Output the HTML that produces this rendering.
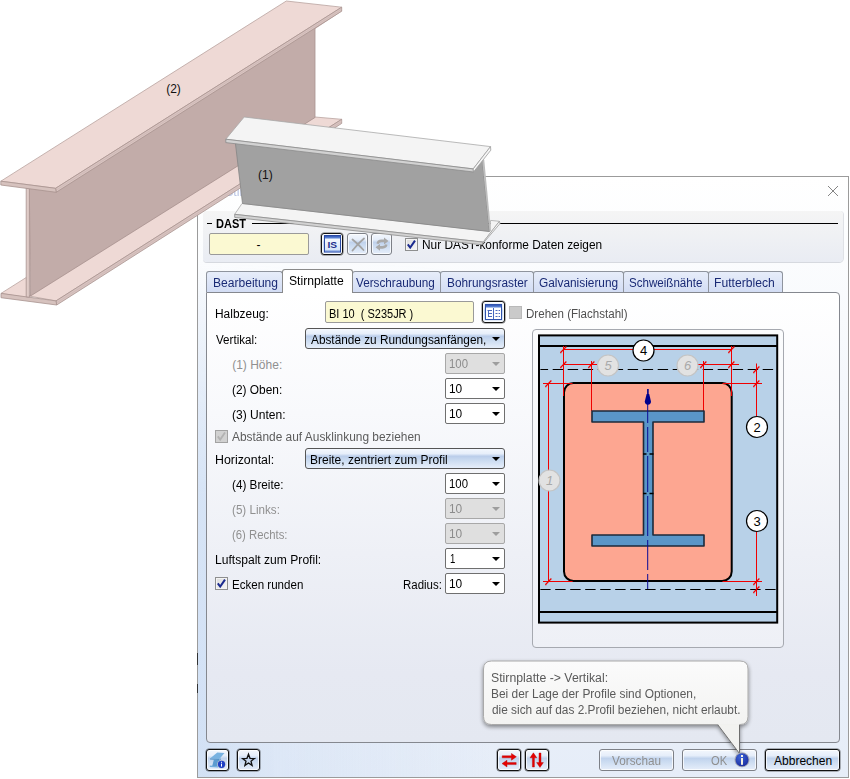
<!DOCTYPE html>
<html lang="de">
<head>
<meta charset="utf-8">
<title>Stirnplattenanschluss</title>
<style>
html,body{margin:0;padding:0;background:#fff;}
body{width:850px;height:779px;position:relative;overflow:hidden;font-family:"Liberation Sans",sans-serif;font-size:12px;color:#000;}
.abs{position:absolute;}
.t{position:absolute;white-space:nowrap;line-height:16px;height:16px;transform-origin:0 50%;}
.g{color:#8e8e8e;}
#dlg{position:absolute;left:197px;top:176px;width:650px;height:600px;border:1px solid #9b9b9b;background:linear-gradient(#ffffff 0px,#fcfdfe 60px,#f0f4fb 300px,#e6edf8 600px);}
#grp{position:absolute;left:203px;top:211px;width:640px;height:51px;border-radius:4px;background:linear-gradient(#f5f5f5,#e9ecf3);box-shadow:0 1px 0 #d6d9df, 1px 0 0 #dfe1e6;}
.tab{position:absolute;box-sizing:border-box;top:271px;height:21px;border:1px solid #8f949e;border-bottom:none;border-radius:3px 3px 0 0;background:linear-gradient(#e7edfa,#d3ddf4);}
.tab.sel{top:269px;height:24px;background:#fff;border-color:#8a8a8a;}
#panel{position:absolute;left:206px;top:292px;width:632px;height:449px;border:1px solid #85888f;border-radius:0 4px 4px 4px;background:linear-gradient(#ffffff 0px,#f8f9fc 120px,#eef0f6 260px,#e6e9f2 380px,#e4e8f1 449px);}
.btn{position:absolute;box-sizing:border-box;border:1px solid #7a7a7a;border-radius:3px;background:linear-gradient(#f3f7fd 0%,#e6eefa 28%,#c0d2ec 42%,#c9daf0 55%,#e6eefa 100%);box-shadow:inset 0 0 0 1px rgba(255,255,255,.75);}
.btn.dis{border-color:#7d8087;}
.btn.def{border-color:#111;box-shadow:inset 0 0 0 1px rgba(255,255,255,.75),0 0 0 0.5px rgba(0,0,0,.55);}
.fld{position:absolute;box-sizing:border-box;border:1px solid #9a9a9a;border-radius:2px;background:#fbf9d2;}
.cmb{position:absolute;box-sizing:border-box;border:1px solid #6f6f6f;border-radius:2px;background:#fff;}
.cmb.dis{border-color:#a8a8a8;background:#dfdfdf;}
.cmb.wide{background:linear-gradient(#f3f7fd 0%,#e6eefa 25%,#bacdea 38%,#c9daf0 58%,#e6eefa 100%);border-color:#555;border-radius:3px;}
.arr{position:absolute;width:0;height:0;border-left:4px solid transparent;border-right:4px solid transparent;border-top:4px solid #000;}
.arr.dis{border-top-color:#9d9d9d;}
.cb{position:absolute;box-sizing:border-box;width:13px;height:13px;border:1px solid #8e8f8f;background:linear-gradient(135deg,#dcdcdc,#f7f7f7);box-shadow:inset 0 0 0 1px #f4f4f4;}
.cb.dis{border-color:#a2a2a2;background:#d1d1d1;box-shadow:none;}
</style>
</head>
<body>
<!-- dialog window -->
<div id="dlg"></div>
<svg class="abs" style="left:826px;top:184px" width="14" height="14"><path d="M2 2 L12 12 M12 2 L2 12" stroke="#777" stroke-width="0.9" fill="none"/></svg>

<div class="abs" style="left:197px;top:653px;width:1px;height:12px;background:#333"></div>
<div class="abs" style="left:197px;top:684px;width:1px;height:9px;background:#333"></div>
<div class="abs" style="left:198px;top:262px;width:649px;height:515px;background:linear-gradient(90deg,rgba(196,216,242,.6) 0,rgba(196,216,242,.28) 12%,rgba(196,216,242,0) 45%);-webkit-mask-image:linear-gradient(to bottom,rgba(0,0,0,0),#000 45%);mask-image:linear-gradient(to bottom,rgba(0,0,0,0),#000 45%);"></div>
<!-- DAST group -->
<div id="grp"></div>
<div class="abs" style="left:207px;top:223px;width:5px;height:1px;background:#000"></div>
<div class="abs" style="left:252px;top:223px;width:586px;height:1px;background:#000"></div>
<div class="fld" style="left:209px;top:233px;width:100px;height:22px;"></div>
<div class="btn def" style="left:321px;top:233px;width:22px;height:22px;"></div>
<div class="btn dis" style="left:347px;top:233px;width:21px;height:22px;"></div>
<div class="btn dis" style="left:371px;top:233px;width:21px;height:22px;"></div>
<div class="cb" style="left:405px;top:238px;"></div>

<!-- tabs -->
<div id="panel"></div>
<div class="tab" style="left:206px;width:77px;"></div>
<div class="tab" style="left:352px;width:89px;"></div>
<div class="tab" style="left:440px;width:94px;"></div>
<div class="tab" style="left:533px;width:91px;"></div>
<div class="tab" style="left:623px;width:86px;"></div>
<div class="tab" style="left:708px;width:75px;"></div>
<div class="tab sel" style="left:282px;width:71px;"></div>


<!--FORM-->
<div class="fld" style="left:325px;top:301px;width:149px;height:22px;"></div>
<div class="btn def" style="left:482px;top:301px;width:23px;height:22px;"></div>
<div class="cb dis" style="left:509px;top:306px;background:#cacaca;border-color:#b9b9b9;"></div>

<div class="cmb wide" style="left:305px;top:328px;width:200px;height:21px;"></div>
<div class="arr" style="left:492px;top:337px;"></div>

<div class="cmb dis" style="left:445px;top:353px;width:60px;height:21px;"></div>
<div class="arr dis" style="left:492px;top:362px;"></div>

<div class="cmb" style="left:445px;top:378px;width:60px;height:21px;"></div>
<div class="arr" style="left:492px;top:387px;"></div>

<div class="cmb" style="left:445px;top:403px;width:60px;height:21px;"></div>
<div class="arr" style="left:492px;top:412px;"></div>

<div class="cb dis" style="left:215px;top:430px;"></div>

<div class="cmb wide" style="left:305px;top:448px;width:200px;height:21px;"></div>
<div class="arr" style="left:492px;top:457px;"></div>

<div class="cmb" style="left:445px;top:473px;width:60px;height:21px;"></div>
<div class="arr" style="left:492px;top:482px;"></div>

<div class="cmb dis" style="left:445px;top:498px;width:60px;height:21px;"></div>
<div class="arr dis" style="left:492px;top:507px;"></div>

<div class="cmb dis" style="left:445px;top:523px;width:60px;height:21px;"></div>
<div class="arr dis" style="left:492px;top:532px;"></div>

<div class="cmb" style="left:445px;top:548px;width:60px;height:21px;"></div>
<div class="arr" style="left:492px;top:557px;"></div>

<div class="cb" style="left:215px;top:577px;"></div>
<div class="cmb" style="left:445px;top:573px;width:60px;height:21px;"></div>
<div class="arr" style="left:492px;top:582px;"></div>
<!--/FORM-->

<!--DIAGRAM-->
<div class="abs" style="left:532px;top:329px;width:250px;height:317px;border:1px solid #a6a9b0;border-radius:4px;background:linear-gradient(#fbfcfd,#eef0f6);"></div>
<svg class="abs" style="left:532px;top:329px" width="252" height="319" viewBox="532 329 252 319">
  <rect x="539" y="335.4" width="238.2" height="287.2" fill="#b8d1e8" stroke="#000" stroke-width="2"/>
  <line x1="540" y1="346" x2="777" y2="346" stroke="#000" stroke-width="2"/>
  <line x1="540" y1="612" x2="777" y2="612" stroke="#000" stroke-width="2"/>
  <line x1="540.4" y1="369.5" x2="776.4" y2="369.5" stroke="#000" stroke-width="1" stroke-dasharray="10.4 4.6" stroke-dashoffset="2.7"/>
  <line x1="540.4" y1="589.5" x2="776.4" y2="589.5" stroke="#000" stroke-width="1" stroke-dasharray="10.4 4.6" stroke-dashoffset="0.2"/>
  <g stroke="#f00000" stroke-width="1" fill="none">
    <path d="M543 383.5 H762 M543 581.5 H762"/>
  </g>
  <!-- plate -->
  <rect x="564" y="383" width="167.7" height="198" rx="9.5" ry="9.5" fill="#fda691" stroke="#000" stroke-width="2"/>
  <!-- red dimension lines -->
  <g stroke="#f00000" stroke-width="1" fill="none">
    <path d="M563.5 349.5 H731.5"/>
    <path d="M563.5 346 V396 M731.5 346 V396"/>
    <path d="M563.5 364.5 H600 M696 364.5 H739"/>
    <path d="M591.5 361 V411 M703.5 361 V411"/>
    <path d="M548.5 383 V581"/>
    <path d="M756.5 363.5 V417 M756.5 531 V596"/>
    <path d="M560.8 353.3 v-1 l5.6 -5.8 M728.8 353.3 v-1 l5.6 -5.8 M560.8 368.3 v-1 l5.6 -5.8 M588.8 368.3 v-1 l5.6 -5.8 M700.8 368.3 v-1 l5.6 -5.8 M728.8 368.3 v-1 l5.6 -5.8 M545.8 387.3 v-1 l5.6 -5.8 M545.8 585.3 v-1 l5.6 -5.8 M753.8 387.3 v-1 l5.6 -5.8 M753.8 373.3 v-1 l5.6 -5.8 M753.8 585.3 v-1 l5.6 -5.8 M753.8 593.3 v-1 l5.6 -5.8" stroke-width="1.25"/>
    <path d="M543 383.5 H572.5 M722.5 383.5 H762 M543 581.5 H572.5 M722.5 581.5 H762"/>
    
  </g>
  <!-- I profile -->
  <path d="M592 411 H704 V422 H653 V535 H704 V546 H592 V535 H643.5 V422 H592 Z" fill="#5a96c8" stroke="#1c2a3a" stroke-width="1.6" stroke-linejoin="round"/>
  <path d="M643 454 H646.5 M649.5 454 H653.5 M643 493.5 H646.5 M649.5 493.5 H653.5" stroke="#000" stroke-width="1.6"/>
  <!-- axis -->
  <line x1="647.7" y1="404" x2="647.7" y2="589" stroke="#0a0a96" stroke-width="1" stroke-dasharray="19 4 25 4 36 4 40 4 30 4 40"/>
  <path d="M647.9 389 V394" stroke="#00008c" stroke-width="1.6"/>
  <path d="M646.6 394 H649.2 L651 401.5 Q651 404.5 647.9 404.8 Q644.8 404.5 644.8 401.5 Z" fill="#00008c"/>
  <!-- circles -->
  <g font-family="Liberation Sans, sans-serif" font-size="13" text-anchor="middle">
    <circle cx="643.5" cy="350.5" r="10.5" fill="#fff" stroke="#000" stroke-width="1.2"/>
    <text x="643.5" y="355">4</text>
    <circle cx="757" cy="427" r="10.5" fill="#fff" stroke="#000" stroke-width="1.2"/>
    <text x="757" y="431.5">2</text>
    <circle cx="757" cy="521" r="10.5" fill="#fff" stroke="#000" stroke-width="1.2"/>
    <text x="757" y="525.5">3</text>
    <g fill="#a9a9a9" font-style="italic">
    <circle cx="608" cy="365.5" r="10.5" fill="#e2e2e2" stroke="#c4c4c4" stroke-width="1.2"/>
    <text x="608" y="370">5</text>
    <circle cx="687.5" cy="365.5" r="10.5" fill="#e2e2e2" stroke="#c4c4c4" stroke-width="1.2"/>
    <text x="687.5" y="370">6</text>
    <circle cx="549.5" cy="480.5" r="10.5" fill="#e2e2e2" stroke="#c4c4c4" stroke-width="1.2"/>
    <text x="549.5" y="485">1</text>
    </g>
  </g>
</svg>
<!--/DIAGRAM-->

<!-- bottom buttons -->
<div class="btn def" style="left:206px;top:749px;width:23px;height:22px;"></div>
<div class="btn def" style="left:237px;top:749px;width:23px;height:22px;"></div>
<div class="btn def" style="left:497px;top:749px;width:24px;height:22px;"></div>
<div class="btn def" style="left:525px;top:749px;width:24px;height:22px;"></div>
<div class="btn dis" style="left:599px;top:749px;width:75px;height:22px;"></div>
<div class="btn dis" style="left:682px;top:749px;width:75px;height:22px;"></div>
<div class="btn def" style="left:765px;top:749px;width:75px;height:22px;"></div>


<!--TOOLTIP-->
<svg class="abs" style="left:476px;top:654px" width="282" height="110" viewBox="476 654 282 110">
  <defs><filter id="sh" x="-10%" y="-10%" width="120%" height="130%"><feGaussianBlur in="SourceAlpha" stdDeviation="2"/><feOffset dx="0" dy="1.5"/><feComponentTransfer><feFuncA type="linear" slope="0.45"/></feComponentTransfer><feMerge><feMergeNode/><feMergeNode in="SourceGraphic"/></feMerge></filter>
  <linearGradient id="gtt" x1="0" y1="0" x2="0" y2="1"><stop offset="0" stop-color="#fbfbfb"/><stop offset="1" stop-color="#efefed"/></linearGradient></defs>
  <path d="M491.5 661 H740 Q748 661 748 669 V716.5 Q748 724.5 740 724.5 H739.5 V753.5 L718 724.5 H491.5 Q483.5 724.5 483.5 716.5 V669 Q483.5 661 491.5 661 Z" fill="url(#gtt)" stroke="#a9a9a9" stroke-width="1" filter="url(#sh)"/>
  <path d="M718 725 L739.5 753.5 V725" fill="#f2f2f0" stroke="#555" stroke-width="0.8"/>
  <path d="M719.5 724.8 H739" stroke="#f1f1ef" stroke-width="1.6"/>
</svg>
<!--/TOOLTIP-->

<!--TEXT-->
<div class="t" style="left:225.0px;top:184px;transform:scaleX(1.0442);color:#b9c4e4;">Stirnplattenanschluss</div>
<div class="t" style="left:216.4px;top:216px;transform:scaleX(0.9219);font-weight:bold;">DAST</div>
<div class="t" style="left:256.6px;top:237px;">-</div>
<div class="t" style="left:421.8px;top:237px;transform:scaleX(0.9895);">Nur DAST-konforme Daten zeigen</div>
<div class="t" style="left:212.8px;top:275px;transform:scaleX(1.0048);color:#1a2a75;">Bearbeitung</div>
<div class="t" style="left:288.7px;top:273px;transform:scaleX(1.0113);">Stirnplatte</div>
<div class="t" style="left:356.1px;top:275px;transform:scaleX(0.9762);color:#1a2a75;">Verschraubung</div>
<div class="t" style="left:446.9px;top:275px;transform:scaleX(0.9840);color:#1a2a75;">Bohrungsraster</div>
<div class="t" style="left:538.8px;top:275px;transform:scaleX(0.9885);color:#1a2a75;">Galvanisierung</div>
<div class="t" style="left:628.8px;top:275px;transform:scaleX(0.9653);color:#1a2a75;">Schweißnähte</div>
<div class="t" style="left:714.2px;top:275px;transform:scaleX(1.0121);color:#1a2a75;">Futterblech</div>
<div class="t" style="left:214.9px;top:306px;transform:scaleX(0.9942);">Halbzeug:</div>
<div class="t" style="left:329.0px;top:306px;transform:scaleX(0.9156);">BI 10&nbsp; ( S235JR )</div>
<div class="t" style="left:525.6px;top:306px;transform:scaleX(0.9635);color:#505050;">Drehen (Flachstahl)</div>
<div class="t" style="left:215.9px;top:332px;transform:scaleX(0.9667);">Vertikal:</div>
<div class="t" style="left:310.5px;top:332px;transform:scaleX(0.9842);">Abstände zu Rundungsanfängen,</div>
<div class="t" style="left:232.2px;top:357px;transform:scaleX(1.0000);color:#909090;">(1) Höhe:</div>
<div class="t" style="left:449.0px;top:356px;transform:scaleX(0.9474);color:#8c8c8c;">100</div>
<div class="t" style="left:232.2px;top:382px;transform:scaleX(0.9918);">(2) Oben:</div>
<div class="t" style="left:448.9px;top:381px;transform:scaleX(0.9917);">10</div>
<div class="t" style="left:232.2px;top:407px;transform:scaleX(1.0039);">(3) Unten:</div>
<div class="t" style="left:448.9px;top:406px;transform:scaleX(0.9917);">10</div>
<div class="t" style="left:232.4px;top:429px;transform:scaleX(0.9921);color:#5c5c5c;">Abstände auf Ausklinkung beziehen</div>
<div class="t" style="left:214.9px;top:452px;transform:scaleX(1.0309);">Horizontal:</div>
<div class="t" style="left:309.5px;top:452px;transform:scaleX(0.9978);">Breite, zentriert zum Profil</div>
<div class="t" style="left:232.2px;top:477px;transform:scaleX(0.9765);">(4) Breite:</div>
<div class="t" style="left:449.0px;top:476px;transform:scaleX(0.9474);">100</div>
<div class="t" style="left:232.2px;top:502px;transform:scaleX(0.9702);color:#909090;">(5) Links:</div>
<div class="t" style="left:448.9px;top:501px;transform:scaleX(0.9917);color:#8c8c8c;">10</div>
<div class="t" style="left:232.3px;top:527px;transform:scaleX(0.9456);color:#909090;">(6) Rechts:</div>
<div class="t" style="left:448.9px;top:526px;transform:scaleX(0.9917);color:#8c8c8c;">10</div>
<div class="t" style="left:214.9px;top:552px;transform:scaleX(1.0078);">Luftspalt zum Profil:</div>
<div class="t" style="left:449.8px;top:551px;transform:scaleX(0.8000);">1</div>
<div class="t" style="left:232.2px;top:577px;transform:scaleX(0.9630);">Ecken runden</div>
<div class="t" style="left:402.8px;top:577px;transform:scaleX(0.9538);">Radius:</div>
<div class="t" style="left:448.9px;top:576px;transform:scaleX(0.9917);">10</div>
<div class="t" style="left:491.2px;top:670px;transform:scaleX(1.0232);color:#5a5a5a;">Stirnplatte -&gt; Vertikal:</div>
<div class="t" style="left:491.2px;top:686px;transform:scaleX(0.9927);color:#5a5a5a;">Bei der Lage der Profile sind Optionen,</div>
<div class="t" style="left:492.2px;top:702px;transform:scaleX(0.9880);color:#5a5a5a;">die sich auf das 2.Profil beziehen, nicht erlaubt.</div>
<div class="t" style="left:612.4px;top:753px;transform:scaleX(0.9796);color:#8f8f8f;">Vorschau</div>
<div class="t" style="left:711.4px;top:753px;transform:scaleX(0.9294);color:#8f8f8f;">OK</div>
<div class="t" style="left:774.1px;top:753px;transform:scaleX(1.0000);">Abbrechen</div>
<!--/TEXT-->
<!-- icons -->
<svg class="abs" style="left:321px;top:233px" width="72" height="22" viewBox="321 233 72 22">
  <defs>
    <linearGradient id="gbar" x1="0" y1="0" x2="0" y2="1"><stop offset="0" stop-color="#2f55b8"/><stop offset="1" stop-color="#6f95dd"/></linearGradient>
    <linearGradient id="gwin" x1="0" y1="0" x2="0" y2="1"><stop offset="0" stop-color="#ffffff"/><stop offset="1" stop-color="#cfe0f7"/></linearGradient>
  </defs>
  <rect x="324.5" y="235.5" width="16" height="16.5" fill="url(#gwin)" stroke="#2a4aa4" stroke-width="1"/>
  <rect x="325" y="236" width="15" height="2.6" fill="url(#gbar)"/>
  <rect x="325" y="250.6" width="15" height="1" fill="#5b7fd0"/>
  <text x="332.2" y="248" font-family="Liberation Sans, sans-serif" font-weight="bold" font-size="8.8" text-anchor="middle" fill="#1c2f8e" textLength="9.6" lengthAdjust="spacingAndGlyphs">IS</text>
  <!-- X -->
  <g stroke="#a3a3a3" stroke-width="1.8" fill="none" stroke-linecap="round">
    <path d="M352.5 239.5 Q357 243 363.5 250"/>
    <path d="M364 238.5 Q358 243.5 352.5 250.5"/>
  </g>
  <!-- refresh -->
  <g fill="#a9a9a9" stroke="none">
    <path d="M376.5 243.5 Q377 239.8 381.5 239.6 L384 239.6 L384 237.6 L388.5 241 L384 244.4 L384 242.2 L381.5 242.2 Q379 242.3 378.6 244 Z"/>
    <path d="M387.5 244.8 Q387 248.5 382.5 248.7 L380 248.7 L380 250.7 L375.5 247.3 L380 243.9 L380 246.1 L382.5 246.1 Q385 246 385.4 244.3 Z"/>
  </g>
</svg>
<!-- checkmarks -->
<svg class="abs" style="left:405px;top:238px" width="13" height="13" viewBox="0 0 13 13"><path d="M2.8 6.4 L5.2 9.6 L10 2.6" stroke="#1b2b8f" stroke-width="2" fill="none"/></svg>
<svg class="abs" style="left:215px;top:577px" width="13" height="13" viewBox="0 0 13 13"><path d="M2.8 6.4 L5.2 9.6 L10 2.6" stroke="#1b2b8f" stroke-width="2" fill="none"/></svg>
<svg class="abs" style="left:215px;top:430px" width="13" height="13" viewBox="0 0 13 13"><path d="M2.8 6.4 L5.2 9.6 L10 2.6" stroke="#b2b2b2" stroke-width="1.8" fill="none"/></svg>
<!-- list icon -->
<svg class="abs" style="left:482px;top:301px" width="23" height="22" viewBox="482 301 23 22">
  <rect x="485.5" y="304.5" width="16" height="15" fill="#fdfeff" stroke="#2f52ac" stroke-width="1"/>
  <rect x="486" y="305" width="15" height="2.6" fill="url(#gbar)"/>
  <path d="M493.5 308 V319" stroke="#4468c0" stroke-width="1"/>
  <path d="M487.5 310.5 H492 M488.5 311 V317 M488.5 313.5 H492 M488.5 316.5 H492" stroke="#3558b4" stroke-width="0.9" fill="none"/>
  <path d="M495.5 310.5 H497.5 M495.5 313.5 H497.5 M495.5 316.5 H497.5 M498.6 310.5 H500 M498.6 313.5 H500 M498.6 316.5 H500" stroke="#3558b4" stroke-width="0.9" fill="none"/>
</svg>
<!-- bottom-left icons -->
<svg class="abs" style="left:206px;top:749px" width="54" height="23" viewBox="206 749 54 23">
  <path d="M217.3 752.5 L224.5 753.1 L219.4 759 L210 758.5 Z" fill="#78b2e0"/>
  <path d="M210 758.5 L219.4 759 L219.3 760 L210 759.5 Z" fill="#4f8fc4"/>
  <path d="M213.9 759.6 L219.3 759.9 L217.4 766.2 L212.2 765.9 Z" fill="#5b9bd0"/>
  <path d="M219.3 759.9 L221 758 L219 765 L217.4 766.2 Z" fill="#4a86ba"/>
  <path d="M209.8 765.6 L217.6 766.2 L221.4 762.4 L222 763.2 L218 767.6 L209.8 767 Z" fill="#70acdc"/>
  <circle cx="221.5" cy="764.3" r="4.3" fill="#c4c6d2"/>
  <circle cx="221.5" cy="764.3" r="3.6" fill="#1f3fc4"/>
  <rect x="221" y="763.6" width="1" height="3" fill="#fff"/>
  <rect x="221" y="761.8" width="1" height="1" fill="#fff"/>
  <path d="M248.5 754.2 L250.0 758.3 L254.4 758.5 L251.0 761.2 L252.1 765.4 L248.5 763.0 L244.9 765.4 L246.0 761.2 L242.6 758.5 L247.0 758.3 Z" fill="none" stroke="#111" stroke-width="1.3" stroke-linejoin="miter"/>
</svg>
<!-- red arrows -->
<svg class="abs" style="left:497px;top:749px" width="52" height="22" viewBox="497 749 52 22">
  <g fill="#e60000" stroke="#b00000" stroke-width="0.4">
    <path d="M502.2 755.8 H511.4 V753.4 L516.4 756.8 L511.4 760.2 V757.8 H502.2 Z"/>
    <path d="M516.2 762.6 H507 V760.2 L502 763.6 L507 767 V764.6 H516.2 Z"/>
    <path d="M532.4 767 V757.8 H530 L533.4 752.8 L536.8 757.8 H534.4 V767 Z"/>
    <path d="M539 753 V762.6 H536.6 L540 767.4 L543.4 762.6 H541 V753 Z"/>
  </g>
</svg>
<!-- info icon -->
<svg class="abs" style="left:733px;top:751px" width="18" height="18" viewBox="733 751 18 18">
  <defs><radialGradient id="ginfo" cx="0.4" cy="0.3" r="0.8"><stop offset="0" stop-color="#3f66d8"/><stop offset="1" stop-color="#16289a"/></radialGradient></defs>
  <circle cx="742" cy="759.8" r="7.5" fill="#a4a7b4"/>
  <circle cx="742" cy="759.8" r="6.5" fill="url(#ginfo)"/>
  <rect x="741" y="755" width="2" height="2" fill="#f6f3e6"/>
  <rect x="741" y="758" width="2" height="6.8" fill="#f3f0e0"/>
</svg>
<!--BEAMS-->
<svg class="abs" style="left:0;top:0" width="850" height="779" viewBox="0 0 850 779">
  <!-- beam 2 (pink) -->
  <g stroke-linejoin="round">
    <!-- bottom flange top face (right part) -->
    <path d="M29 296 L315 117 L341.7 119.3 L56 300.9 Z" fill="#eed9d5" stroke="#b9a3a0" stroke-width="0.8"/>
    <!-- bottom flange left part top face -->
    <path d="M1 293.4 L27 277 L27 297.5 Z" fill="#eed9d5" stroke="#b9a3a0" stroke-width="0.8"/>
    <!-- bottom flange side right -->
    <path d="M56 300.9 L341.7 119.3 L341.7 123.4 L56.7 305 Z" fill="#d9c4c1" stroke="#a8938f" stroke-width="0.8"/>
    <path d="M56.3 303 L341.7 121.4" stroke="#cbb6b3" stroke-width="0.7" fill="none"/>
    <!-- bottom flange near edge -->
    <path d="M1 293.4 L56 300.9 L56.7 305 L1 297.7 Z" fill="#d6c2be" stroke="#a8938f" stroke-width="0.8"/>
    <!-- web right face -->
    <path d="M29.3 189 L315 25 L315 117.5 L30.5 296 Z" fill="#c2aca9" stroke="#a8928f" stroke-width="0.8"/>
    <!-- web near face -->
    <path d="M26.2 188 L29.4 188.5 L29.4 297.3 L26.2 296.8 Z" fill="#dfcbc7" stroke="#a8928f" stroke-width="0.8"/>
    <!-- top flange underside at far end -->
    <path d="M315 29 L341.7 11.2 L341.7 8 L315 25 Z" fill="#c2aca9"/>
    <!-- top flange top face -->
    <path d="M0.8 181.2 L286.3 1 L341.7 7.2 L55.6 188.3 Z" fill="#eed9d5" stroke="#b9a3a0" stroke-width="0.8"/>
    <!-- top flange right side -->
    <path d="M55.6 188.3 L341.7 7.2 L341.7 11.2 L56.2 192.3 Z" fill="#d9c4c1" stroke="#a8938f" stroke-width="0.8"/>
    <path d="M55.9 190.3 L341.7 9.2" stroke="#cbb6b3" stroke-width="0.7" fill="none"/>
    <!-- top flange near edge -->
    <path d="M0.8 181.2 L55.6 188.3 L56.2 192.3 L0.8 185 Z" fill="#d6c2be" stroke="#a8938f" stroke-width="0.8"/>
  </g>
  <text x="166.2" y="93" font-family="Liberation Sans, sans-serif" font-size="12" fill="#111">(2)</text>
  <!-- beam 1 (gray) -->
  <g stroke-linejoin="round">
    <!-- bottom flange top face -->
    <path d="M242 203.5 L489.5 231.3 L490.6 220.4 L499.4 221.3 L483.2 242.1 L234.7 214.3 Z" fill="#f4f4f4" stroke="#a9a9a9" stroke-width="0.8"/>
    <!-- bottom flange front edge -->
    <path d="M234.7 214.3 L483.2 242.1 L481.8 244.8 L234.7 217.4 Z" fill="#d2d2d2" stroke="#8c8c8c" stroke-width="0.8"/>
    <path d="M483.2 242.1 L499.4 221.3 L500 223.6 L481.8 244.8 Z" fill="#f6f6f6" stroke="#9c9c9c" stroke-width="0.8"/>
    <!-- web -->
    <path d="M235.4 143.2 L482.3 160.4 L489.5 231.5 L242.5 203.5 Z" fill="#a1a1a1" stroke="#858585" stroke-width="0.8"/>
    <path d="M482.3 160.4 L484.2 159.4 L491 231 L489.5 231.5 Z" fill="#bdbdbd"/>
    <!-- top flange face -->
    <path d="M244.2 117 L490.5 146.6 L473.2 168.9 L225.8 139.2 Z" fill="#f4f4f4" stroke="#a9a9a9" stroke-width="0.8"/>
    <!-- top flange front edge -->
    <path d="M225.8 139.2 L473.2 168.9 L473.5 172 L225.8 142.6 Z" fill="#d2d2d2" stroke="#8c8c8c" stroke-width="0.8"/>
    <path d="M473.2 168.9 L490.5 146.6 L490.8 150.2 L473.5 172 Z" fill="#f6f6f6" stroke="#9c9c9c" stroke-width="0.8"/>
  </g>
  <text x="258" y="179" font-family="Liberation Sans, sans-serif" font-size="12" fill="#111">(1)</text>
</svg>
<!--/BEAMS-->

</body>
</html>
